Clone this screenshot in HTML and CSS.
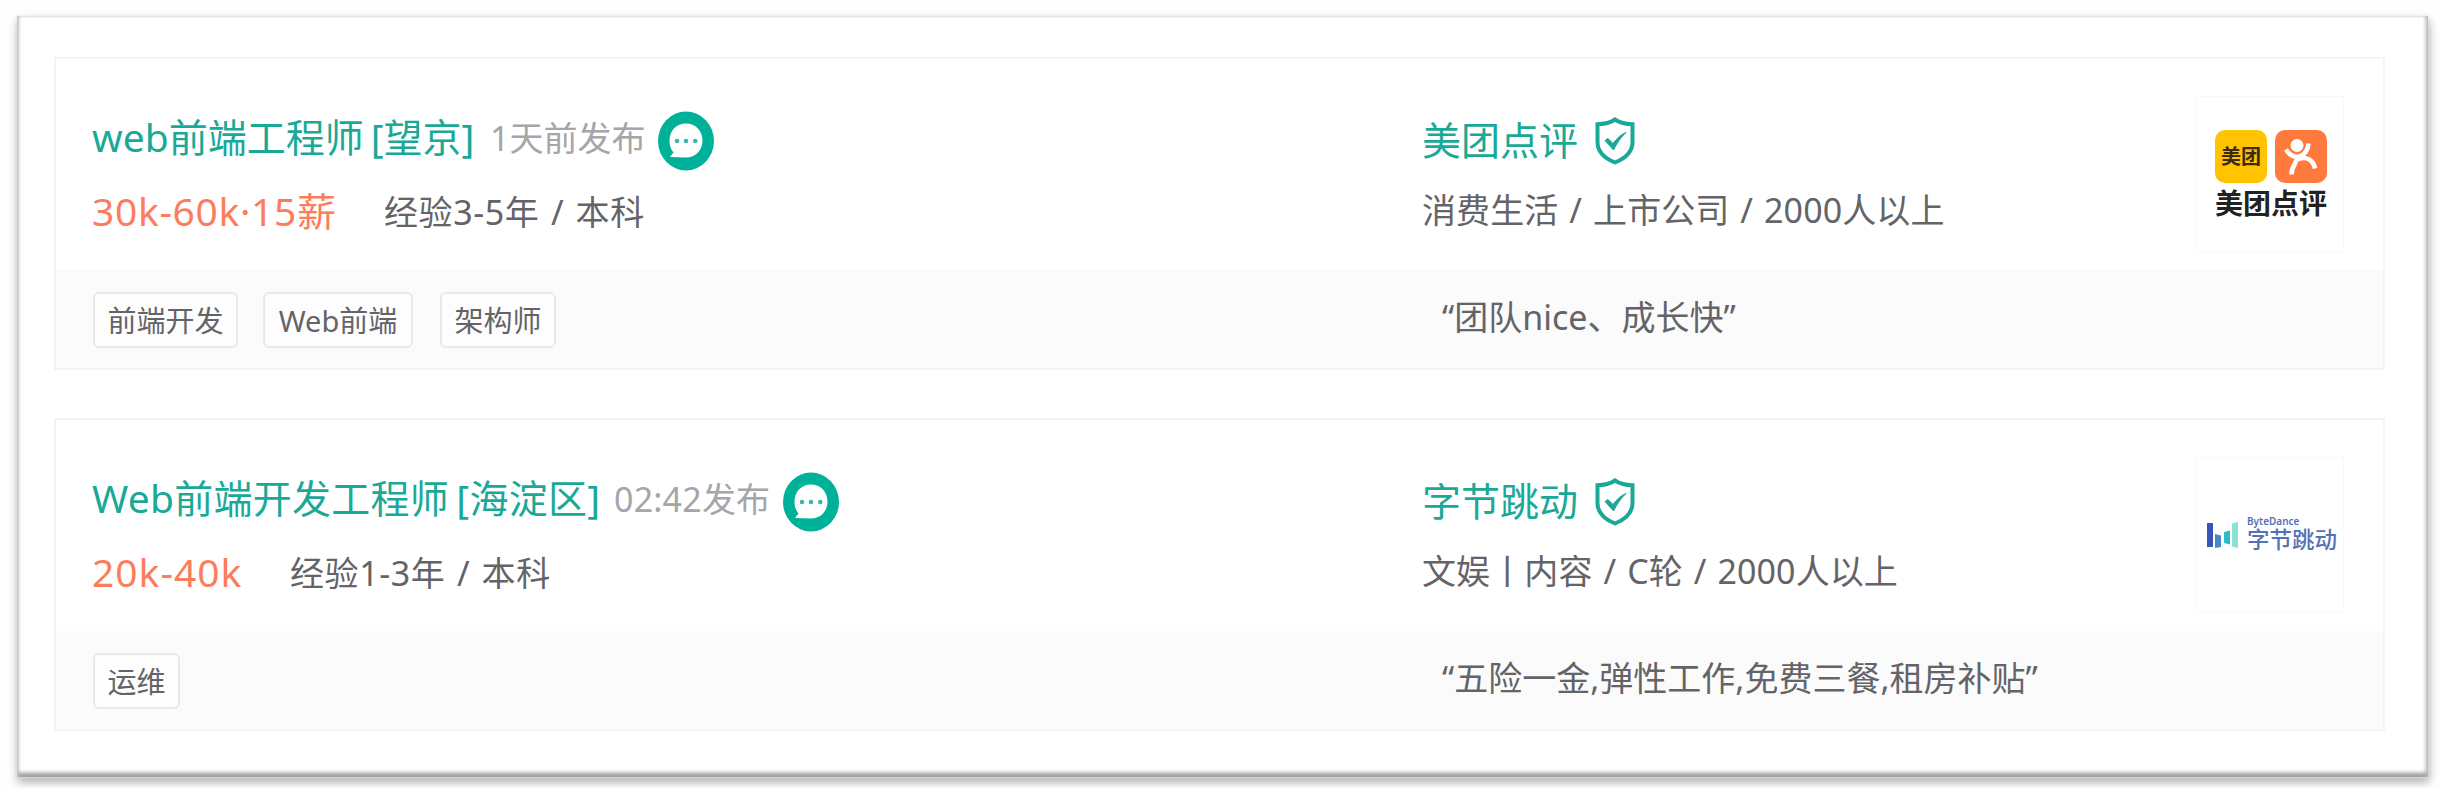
FILE: index.html
```html
<!DOCTYPE html>
<html lang="zh-CN">
<head>
<meta charset="utf-8">
<title>职位列表</title>
<link rel="stylesheet" href="styles.css">
</head>
<body>
<svg class="defs" width="0" height="0" aria-hidden="true">
  <symbol id="chat" viewBox="0 0 56 60">
    <ellipse cx="28" cy="30" rx="28" ry="29.5" fill="#00b199"/>
    <path d="M12 46 L15.500 41.500 C12.500 38 11.500 34 11.500 29.500 C11.500 19.500 18.500 12.500 28 12.500 C37.500 12.500 44.500 19.500 44.500 29.500 C44.500 39.500 37.500 46.500 28 46.500 Z" fill="#fff"/>
    <g fill="#38b8a6"><circle cx="19" cy="30" r="2.300"/><circle cx="28" cy="30" r="2.300"/><circle cx="37.300" cy="30" r="2.300"/></g>
  </symbol>
  <symbol id="shield" viewBox="0 0 40 48">
    <path d="M20 2.500 C15 6 9 7.200 2.500 7.200 V25 C2.500 35 10 41.500 20 45.500 C30 41.500 37.500 35 37.500 25 V7.200 C31 7.200 25 6 20 2.500 Z" fill="none" stroke="#1aa997" stroke-width="4"/>
    <path d="M10 23.500 L13 21.500 L18 26.500 C22 21 26 17.500 31 15.500 C26 20 22 26 18.500 33 Z" fill="#1aa997" stroke="#1aa997" stroke-width="1"/>
  </symbol>
</svg>
<main class="panel">
  <article class="card">
    <div class="head">
      <section class="job">
        <div class="line"><a class="title t1">web前端工程师 [望京]</a><span class="time">1天前发布</span><svg class="chat"><use href="#chat"/></svg></div>
        <div class="line second"><span class="salary s1">30k-60k·15薪</span><span class="req">经验3-5年 / 本科</span></div>
      </section>
      <section class="company">
        <div class="line"><a class="title">美团点评</a><svg class="shield"><use href="#shield"/></svg></div>
        <div class="line second"><span class="info">消费生活 / 上市公司 / 2000人以上</span></div>
      </section>
      <div class="logo meituan">
        <div class="apps">
          <span class="app yellow">美团</span>
          <svg class="app orange" viewBox="0 0 51 53"><circle cx="21.500" cy="15.500" r="6.500" fill="#fff"/><path d="M10.500 19.500 C14 25 19 27.500 24 26.500 C29 25 32.500 20 33 13.500 M22 26 C22 33 16 35 16 44.500 M23 29 C31 26 38 30 39.500 38.500" fill="none" stroke="#fff" stroke-width="4.600"/></svg>
        </div>
        <span class="brand">美团点评</span>
      </div>
    </div>
    <div class="foot">
      <div class="tags"><span class="tag w1">前端开发</span><span class="tag w2">Web前端</span><span class="tag w3">架构师</span></div>
      <p class="quote">“团队nice、成长快”</p>
    </div>
  </article>
  <article class="card">
    <div class="head">
      <section class="job">
        <div class="line"><a class="title t2">Web前端开发工程师 [海淀区]</a><span class="time">02:42发布</span><svg class="chat"><use href="#chat"/></svg></div>
        <div class="line second"><span class="salary s2">20k-40k</span><span class="req">经验1-3年 / 本科</span></div>
      </section>
      <section class="company">
        <div class="line"><a class="title">字节跳动</a><svg class="shield"><use href="#shield"/></svg></div>
        <div class="line second"><span class="info">文娱丨内容 / C轮 / 2000人以上</span></div>
      </section>
      <div class="logo byte">
        <svg class="bars" viewBox="0 0 32 26"><path d="M0 1h6v24H0z" fill="#3657b5"/><path d="M8 12l6 1.500v11.500l-6 1z" fill="#4488c6"/><path d="M17 10l6-1.500v14l-6-1.500z" fill="#30bcc6"/><path d="M25 1.500l6-1.500v26l-6-1.500z" fill="#8be0d8"/></svg>
        <div class="names"><span class="en">ByteDance</span><span class="cn">字节跳动</span></div>
      </div>
    </div>
    <div class="foot">
      <div class="tags"><span class="tag w4">运维</span></div>
      <p class="quote">“五险一金,弹性工作,免费三餐,租房补贴”</p>
    </div>
  </article>
</main>
</body>
</html>
```
FILE: styles.css
```css
* { box-sizing: border-box; }
body {
  margin: 0;
  height: 788px;
  padding: 16px 14px 11px 17px;
  overflow: hidden;
  background: #fefefe;
  font-family: "Noto Sans", "Noto Sans CJK SC", sans-serif;
  color: #646468;
  white-space: nowrap;
}
.defs { position: absolute; }
.panel {
  height: 761px;
  padding: 41px 43px 0 37px;
  display: flex;
  flex-direction: column;
  gap: 48px;
  background: #fff;
  box-shadow:
    inset 3px 0 3px -1px #c4c4c4,
    inset -3px 0 4px -1px #b5b5b5,
    inset 0 -5px 4px -1px #969696,
    0 1px 3px #e0e0e0,
    1px 5px 9px rgba(0, 0, 0, .34);
}
.card {
  height: 313px;
  display: flex;
  flex-direction: column;
  border: 2px solid #f4f4f4;
}
.head { height: 211px; padding: 48px 39px 0 36px; display: flex; }
.job, .company { display: flex; flex-direction: column; gap: 14px; }
.job { width: 1330px; }
.company { width: 774px; }
.line { height: 60px; line-height: 60px; display: flex; }
.title { font-size: 39px; color: #1aa997; }
.t1 { width: 398px; word-spacing: -3px; }
.t2 { width: 522px; letter-spacing: .25px; word-spacing: -3px; }
.time { font-size: 34px; color: #a5a5aa; line-height: 62px; }
.t2 + .time { letter-spacing: .2px; }
.chat { width: 56px; height: 60px; margin: 4px 0 0 13px; }
.salary { font-size: 39px; color: #fc7d5b; }
.s1 { width: 292px; letter-spacing: .65px; }
.s2 { width: 198px; letter-spacing: 1px; }
.req, .info, .quote { font-size: 34px; }
.req { line-height: 62px; letter-spacing: .6px; word-spacing: 2px; }
.company .title { line-height: 65px; }
.company .info { line-height: 59px; letter-spacing: .1px; word-spacing: 2px; }
.shield { width: 40px; height: 48px; margin: 10px 0 0 17px; }
.logo { width: 148px; height: 156px; margin-top: -11px; border: 1px solid #f8f8f8; display: flex; }
.meituan { flex-direction: column; align-items: flex-start; padding: 33px 0 0 18px; }
.apps { display: flex; gap: 8px; }
.app { width: 52px; height: 53px; border-radius: 10px; }
.yellow { background: #ffc300; color: #3b2b12; font-size: 20px; font-weight: 700; line-height: 53px; text-align: center; }
.orange { background: #ff7a3d; }
.brand { font-size: 28px; font-weight: 700; color: #222; line-height: 40px; }
.byte { padding: 63px 0 0 10px; }
.bars { width: 32px; height: 26px; margin-top: 1px; }
.names { display: flex; flex-direction: column; margin: -6px 0 0 8px; color: #5571b5; }
.en { font-size: 10px; font-weight: 600; line-height: 12px; }
.cn { font-size: 22.500px; font-weight: 500; line-height: 26px; }
.foot { flex: 1; display: flex; background: #fbfbfb; padding: 22px 0 0 37px; }
.tags { width: 1349px; display: flex; }
.tag {
  height: 56px;
  border: 2px solid #e9e9e9;
  border-radius: 6px;
  background: #fdfdfd;
  font-size: 29px;
  line-height: 54px;
  text-align: center;
}
.w1 { width: 145px; margin-right: 25px; }
.w2 { width: 150px; margin-right: 27px; }
.w3 { width: 116px; }
.w4 { width: 87px; }
.quote { margin: 0; line-height: 50px; }
```
